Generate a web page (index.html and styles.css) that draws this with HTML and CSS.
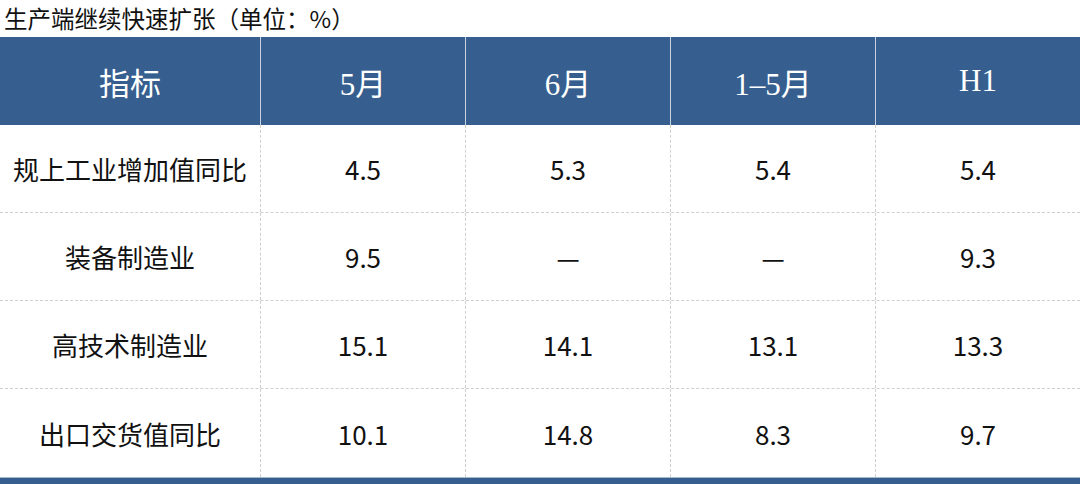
FILE: index.html
```html
<!DOCTYPE html>
<html lang="zh-CN">
<head>
<meta charset="utf-8">
<title>生产端继续快速扩张</title>
<link rel="stylesheet" href="styles.css">
</head>
<body>
<div class="page">
  <div class="title">生产端继续快速扩张（单位：%）</div>
  <div class="table">
    <div class="row head">
      <div class="cell">指标</div>
      <div class="cell">5月</div>
      <div class="cell">6月</div>
      <div class="cell">1–5月</div>
      <div class="cell">H1</div>
    </div>
    <div class="row">
      <div class="cell">规上工业增加值同比</div>
      <div class="cell">4.5</div>
      <div class="cell">5.3</div>
      <div class="cell">5.4</div>
      <div class="cell">5.4</div>
    </div>
    <div class="row">
      <div class="cell">装备制造业</div>
      <div class="cell">9.5</div>
      <div class="cell">—</div>
      <div class="cell">—</div>
      <div class="cell">9.3</div>
    </div>
    <div class="row">
      <div class="cell">高技术制造业</div>
      <div class="cell">15.1</div>
      <div class="cell">14.1</div>
      <div class="cell">13.1</div>
      <div class="cell">13.3</div>
    </div>
    <div class="row last">
      <div class="cell">出口交货值同比</div>
      <div class="cell">10.1</div>
      <div class="cell">14.8</div>
      <div class="cell">8.3</div>
      <div class="cell">9.7</div>
    </div>
  </div>
  <div class="bar"></div>
</div>
</body>
</html>
```

FILE: styles.css
```css
html, body {
  margin: 0;
  padding: 0;
  background: #ffffff;
}

.page {
  width: 1080px;
  height: 484px;
  overflow: hidden;
}

.title {
  height: 37px;
  line-height: 37px;
  padding-left: 4px;
  box-sizing: border-box;
  font-family: "Noto Sans CJK SC", "Noto Sans", sans-serif;
  font-size: 23.5px;
  color: #111111;
  white-space: nowrap;
}

.table {
  display: flex;
  flex-direction: column;
}

.row {
  display: grid;
  grid-template-columns: 260px 205px 205px 205px 205px;
  height: 88px;
  box-sizing: border-box;
  border-bottom: 1px dashed #cfcfcf;
}

.row.last {
  border-bottom: none;
}

.cell {
  display: flex;
  align-items: center;
  justify-content: center;
  box-sizing: border-box;
  font-family: "Noto Sans CJK SC", "Noto Sans", sans-serif;
  font-size: 26px;
  color: #111111;
  white-space: nowrap;
}

.cell + .cell {
  border-left: 1px dashed #cfcfcf;
}

.row.head {
  background: #365f8f;
  border-bottom: none;
}

.row.head .cell {
  font-family: "Liberation Serif", "Noto Sans CJK SC", serif;
  font-size: 31px;
  color: #ffffff;
}

.row.head .cell + .cell {
  border-left: 1px solid #c9d3e0;
}

.bar {
  height: 7px;
  box-sizing: border-box;
  background: #365f8f;
  border-top: 1px solid #a8b8cc;
}
```
